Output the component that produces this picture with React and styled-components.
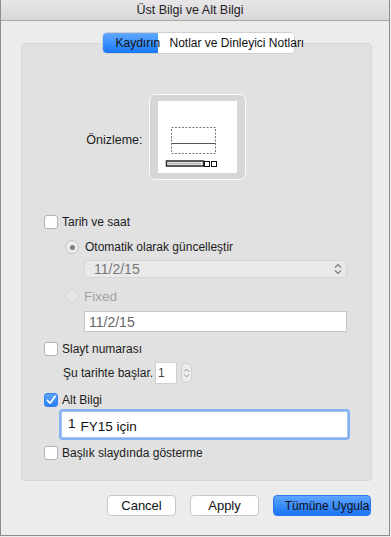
import React from 'react';
import styled, { createGlobalStyle } from 'styled-components';

const GlobalStyle = createGlobalStyle`
  html, body {
    margin: 0;
    padding: 0;
    background: #ececec;
  }
  body {
    font-family: "Liberation Sans", Arial, sans-serif;
    font-size: 12px;
    color: #1c1c1c;
  }
`;

const Chevrons = ({ color = '#7a7a7a' }) => (
  <svg width="8" height="12" viewBox="0 0 8 12">
    <path d="M1 4.5 L4 1.5 L7 4.5" fill="none" stroke={color} strokeWidth="1.1" />
    <path d="M1 7.5 L4 10.5 L7 7.5" fill="none" stroke={color} strokeWidth="1.1" />
  </svg>
);

const PreviewArt = () => (
  <svg width="79" height="72" viewBox="0 0 79 72">
    <rect x="13.5" y="26.5" width="44" height="26" fill="none" stroke="#777" strokeDasharray="2 1.5" />
    <line x1="13.5" y1="42.5" x2="57.5" y2="42.5" stroke="#555" />
    <rect x="8.5" y="60" width="37" height="5" fill="#fff" stroke="#333" strokeWidth="1.6" />
    <rect x="10" y="61.5" width="33" height="2" fill="#bbb" />
    <rect x="46.5" y="60.5" width="5" height="5" fill="#fff" stroke="#111" />
    <rect x="53.5" y="60.5" width="5" height="5" fill="#fff" stroke="#111" />
  </svg>
);

const Checkbox = ({ checked }) => (
  <Box checked={checked}>
    {checked && (
      <svg width="12" height="12" viewBox="0 0 12 12">
        <path d="M2.5 6.5 L5 9.2 L10 2.5" fill="none" stroke="#fff" strokeWidth="1.8" strokeLinecap="round" strokeLinejoin="round" />
      </svg>
    )}
  </Box>
);

const App = () => (
  <>
    <GlobalStyle />
    <Window>
      <TitleBar>Üst Bilgi ve Alt Bilgi</TitleBar>
      <Body>
        <Tabs>
          <Tab active>Kaydırın</Tab>
          <Tab>Notlar ve Dinleyici Notları</Tab>
        </Tabs>
        <Group>
          <PreviewRow>
            <PreviewLabel>Önizleme:</PreviewLabel>
            <PreviewFrame>
              <PreviewPage>
                <PreviewArt />
              </PreviewPage>
            </PreviewFrame>
          </PreviewRow>

          <CheckRow mt={35}>
            <Checkbox />
            <span>Tarih ve saat</span>
          </CheckRow>

          <RadioRow mt={11}>
            <Radio selected />
            <span>Otomatik olarak güncelleştir</span>
          </RadioRow>

          <Select mt={6}>
            <span>11/2/15</span>
            <Chevrons />
          </Select>

          <RadioRow mt={11} disabled>
            <Radio disabled />
            <span>Fixed</span>
          </RadioRow>

          <TextField mt={8}>11/2/15</TextField>

          <CheckRow mt={10}>
            <Checkbox />
            <span>Slayt numarası</span>
          </CheckRow>

          <StartRow>
            <span>Şu tarihte başlar.</span>
            <NumberField>1</NumberField>
            <Stepper>
              <Chevrons color="#8a8a8a" />
            </Stepper>
          </StartRow>

          <CheckRow mt={9}>
            <Checkbox checked />
            <span>Alt Bilgi</span>
          </CheckRow>

          <FooterField>
            <Caret>1</Caret>
            <span>FY15 için</span>
          </FooterField>

          <CheckRow mt={8}>
            <Checkbox />
            <span>Başlık slaydında gösterme</span>
          </CheckRow>
        </Group>

        <Buttons>
          <Button>Cancel</Button>
          <Button>Apply</Button>
          <Button primary wide>Tümüne Uygula</Button>
        </Buttons>
      </Body>
    </Window>
  </>
);

// Styled Components
const Window = styled.div`
  width: 390px;
  height: 536px;
  box-sizing: border-box;
  border: 1px solid #8c8c8c;
  border-top: none;
  background: #ececec;
  display: flex;
  flex-direction: column;
`;

const TitleBar = styled.div`
  height: 20px;
  border-bottom: 1px solid #a9a9a9;
  background: linear-gradient(#e9e6e9, #d9d6d9);
  display: flex;
  align-items: center;
  justify-content: center;
  padding-right: 10px;
  font-size: 12.5px;
  color: #222;
`;

const Body = styled.div`
  padding: 12px 17px 0 20px;
  display: flex;
  flex-direction: column;
`;

const Tabs = styled.div`
  align-self: center;
  margin-left: 3px;
  display: flex;
  height: 20px;
  border-radius: 4px;
  background: #fff;
  box-shadow: 0 0 0 1px #cfcfcf;
  position: relative;
  z-index: 1;
  margin-bottom: -10px;
`;

const Tab = styled.div`
  position: relative;
  z-index: ${(p) => (p.active ? 2 : 1)};
  box-sizing: border-box;
  height: 20px;
  display: flex;
  align-items: center;
  white-space: nowrap;
  font-size: 12px;
  color: #111;
  width: ${(p) => (p.active ? '55px' : '136px')};
  padding-left: ${(p) => (p.active ? '13px' : '12px')};
  border-radius: ${(p) => (p.active ? '4px 0 0 4px' : '0 4px 4px 0')};
  background: ${(p) => (p.active ? 'linear-gradient(#62a9ff, #1878f7)' : '#fff')};
`;

const Group = styled.div`
  width: 351px;
  box-sizing: border-box;
  background: #e1e1e1;
  border: 1px solid #d7d7d7;
  border-radius: 4px;
  padding: 50px 0 20px 22px;
  display: flex;
  flex-direction: column;
  align-items: flex-start;
`;

const PreviewRow = styled.div`
  align-self: stretch;
  margin-left: -22px;
  display: grid;
  grid-template-columns: 1fr auto 1fr;
  align-items: center;
`;

const PreviewLabel = styled.div`
  justify-self: end;
  margin-right: 5px;
  padding-top: 6px;
  font-size: 12.5px;
`;

const PreviewFrame = styled.div`
  width: 97px;
  height: 86px;
  box-sizing: border-box;
  border: 1px solid #fbfbfb;
  border-radius: 6px;
  background: #d6d6d6;
  display: flex;
  align-items: center;
  justify-content: center;
  margin-left: 1px;
`;

const PreviewPage = styled.div`
  width: 79px;
  height: 72px;
  background: #fff;
  display: flex;
`;

const CheckRow = styled.div`
  margin-top: ${(p) => p.mt}px;
  display: flex;
  align-items: center;
  gap: 4px;
  height: 14px;
`;

const Box = styled.div`
  width: 14px;
  height: 14px;
  box-sizing: border-box;
  border-radius: 3px;
  border: 1px solid ${(p) => (p.checked ? '#2f84f5' : '#b3b3b3')};
  background: ${(p) => (p.checked ? 'linear-gradient(#5ea4fb, #2a7ef5)' : '#fff')};
  display: flex;
  align-items: center;
  justify-content: center;
`;

const RadioRow = styled.div`
  margin-top: ${(p) => p.mt}px;
  margin-left: 21px;
  display: flex;
  align-items: center;
  gap: ${(p) => (p.disabled ? '5px' : '6px')};
  height: 14px;
  font-size: ${(p) => (p.disabled ? '13.5px' : '12px')};
  color: ${(p) => (p.disabled ? '#a3a3a3' : '#1c1c1c')};
`;

const Radio = styled.div`
  width: 14px;
  height: 14px;
  box-sizing: border-box;
  border-radius: 50%;
  border: 1px solid ${(p) => (p.disabled ? '#d2d2d2' : '#c4c4c4')};
  background: ${(p) => (p.disabled ? '#e6e6e6' : '#ececec')};
  display: flex;
  align-items: center;
  justify-content: center;

  &::after {
    content: '';
    display: ${(p) => (p.selected ? 'block' : 'none')};
    width: 5px;
    height: 5px;
    border-radius: 50%;
    background: #7d7d7d;
  }
`;

const Select = styled.div`
  margin-top: ${(p) => p.mt}px;
  margin-left: 40px;
  width: 263px;
  height: 18px;
  box-sizing: border-box;
  border: 1px solid #d6d6d6;
  border-radius: 4px;
  background: #e9e9e9;
  display: flex;
  align-items: center;
  justify-content: space-between;
  padding: 0 4px 0 9px;
  font-size: 14px;
  color: #777;
`;

const TextField = styled.div`
  margin-top: ${(p) => p.mt}px;
  margin-left: 40px;
  width: 263px;
  height: 21px;
  box-sizing: border-box;
  border: 1px solid #c6c6c6;
  background: #fff;
  display: flex;
  align-items: center;
  padding-left: 4px;
  font-size: 14px;
  color: #666;
`;

const StartRow = styled.div`
  margin-top: 6px;
  margin-left: 19px;
  height: 22px;
  display: flex;
  align-items: center;
`;

const NumberField = styled.div`
  margin-left: 2px;
  width: 22px;
  height: 22px;
  box-sizing: border-box;
  border: 1px solid #d0d0d0;
  background: #fff;
  padding: 3px 0 0 2px;
  font-size: 12px;
  color: #444;
`;

const Stepper = styled.div`
  margin-left: 4px;
  width: 11px;
  height: 20px;
  box-sizing: border-box;
  border: 1px solid #cfcfcf;
  border-radius: 5px;
  background: #ededed;
  display: flex;
  align-items: center;
  justify-content: center;

  svg {
    width: 7px;
  }
`;

const FooterField = styled.div`
  margin-top: 4px;
  margin-left: 17px;
  width: 287px;
  height: 27px;
  box-sizing: border-box;
  border: 1px solid #a8c6ee;
  box-shadow: 0 0 0 2px #83b1f3;
  border-radius: 2px;
  background: #fff;
  display: flex;
  align-items: center;
  gap: 5px;
  padding: 3px 0 0 6px;
  font-size: 13.5px;
  color: #111;
`;

const Caret = styled.span`
  margin-top: -5px;
`;

const Buttons = styled.div`
  margin-top: 14px;
  display: flex;
  justify-content: flex-end;
  gap: 14px;
  padding-right: 1px;
`;

const Button = styled.div`
  width: ${(p) => (p.wide ? '98px' : '69px')};
  height: 21px;
  box-sizing: border-box;
  border-radius: 4px;
  border: 1px solid ${(p) => (p.primary ? '#2a78f0' : '#c8c8c8')};
  background: ${(p) => (p.primary ? 'linear-gradient(#5fa6ff, #1a74f5)' : '#fff')};
  display: flex;
  align-items: center;
  justify-content: center;
  white-space: nowrap;
  font-size: ${(p) => (p.primary ? '12px' : '13px')};
  color: #111;
  padding-left: ${(p) => (p.primary ? '10px' : '0')};
`;

export default App;
